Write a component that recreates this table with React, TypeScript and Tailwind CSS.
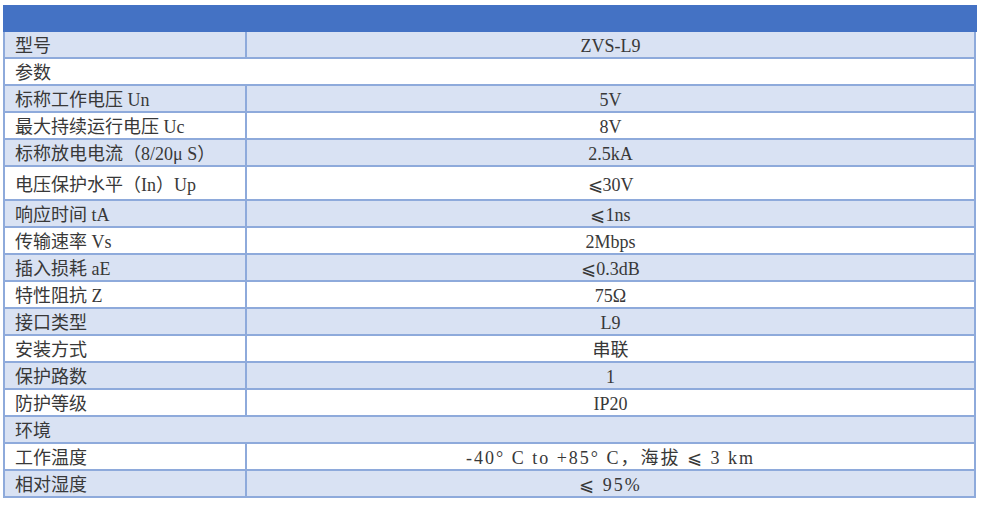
import React from "react";

type Row = { k: string; v?: string; span?: boolean; tall?: boolean; wide?: boolean };

const rows: Row[] = [
  { k: "型号", v: "ZVS-L9" },
  { k: "参数", span: true },
  { k: "标称工作电压 Un", v: "5V" },
  { k: "最大持续运行电压 Uc", v: "8V" },
  { k: "标称放电电流（8/20μ S）", v: "2.5kA" },
  { k: "电压保护水平（In）Up", v: "⩽30V", tall: true },
  { k: "响应时间 tA", v: "⩽1ns" },
  { k: "传输速率 Vs", v: "2Mbps" },
  { k: "插入损耗 aE", v: "⩽0.3dB" },
  { k: "特性阻抗 Z", v: "75Ω" },
  { k: "接口类型", v: "L9" },
  { k: "安装方式", v: "串联" },
  { k: "保护路数", v: "1" },
  { k: "防护等级", v: "IP20" },
  { k: "环境", span: true },
  { k: "工作温度", v: "-40° C to +85° C，海拔 ⩽ 3 km", wide: true },
  { k: "相对湿度", v: "⩽ 95%", wide: true },
];

export default function App() {
  return (
    <div
      className="w-[982px] h-[507px] bg-white pt-[5px] pl-[3px] text-[18px] text-[#383838]"
      style={{ fontFamily: '"Liberation Serif", "Noto Sans CJK SC", serif' }}
    >
      <div className="w-[974px]">
        <div className="h-[27px] bg-[#4472c4]" />
        <div className="border-x-2 border-[#8eaadb] mr-[1px]">
          {rows.map((r, i) => {
            const bg = i % 2 === 0 ? "bg-[#d9e2f3]" : "bg-white";
            const h = r.tall ? "h-[34px]" : "h-[27px]";
            return (
              <div key={i} className={`flex border-b-2 border-[#8eaadb] ${bg} ${h}`}>
                {r.span ? (
                  <div className="flex items-center pl-[10px] pt-[4px] w-full">{r.k}</div>
                ) : (
                  <>
                    <div className="flex items-center pl-[10px] pt-[4px] w-[242px] shrink-0 border-r-2 border-[#8eaadb] whitespace-nowrap">
                      {r.k}
                    </div>
                    <div
                      className={`flex items-center justify-center pt-[4px] flex-1 whitespace-pre ${
                        r.wide ? "tracking-[2px]" : ""
                      }`}
                    >
                      {r.v}
                    </div>
                  </>
                )}
              </div>
            );
          })}
        </div>
      </div>
    </div>
  );
}
